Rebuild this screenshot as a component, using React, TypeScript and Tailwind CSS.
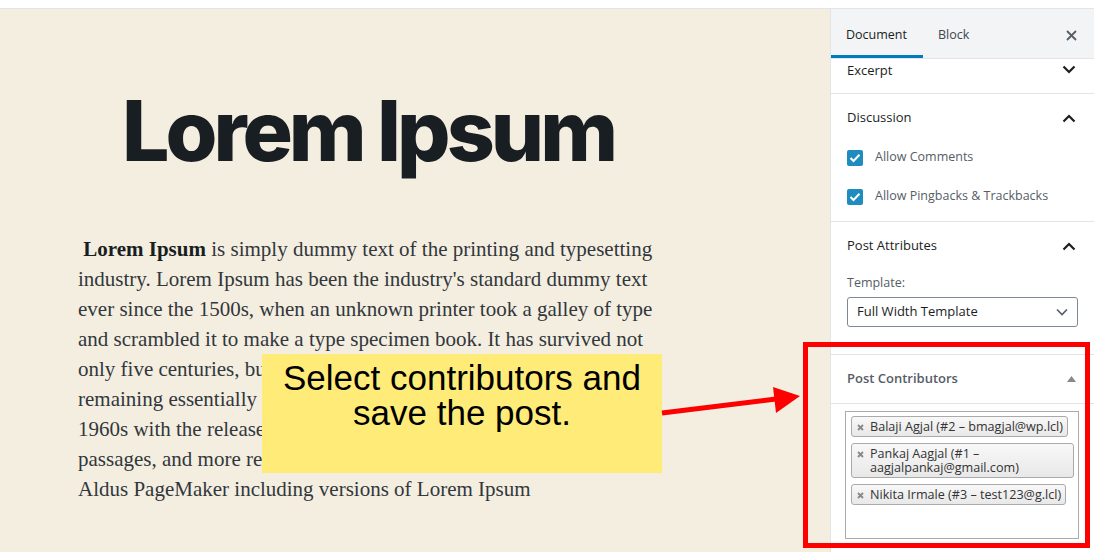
import React from 'react';

const sans = { fontFamily: '"Open Sans", "Noto Sans", sans-serif' };

const bodyLines = [
  'industry. Lorem Ipsum has been the industry\'s standard dummy text',
  'ever since the 1500s, when an unknown printer took a galley of type',
  'and scrambled it to make a type specimen book. It has survived not',
  'only five centuries, but also the leap into electronic typesetting,',
  'remaining essentially unchanged. It was popularised in the',
  '1960s with the release of Letraset sheets containing Lorem Ipsum',
  'passages, and more recently with desktop publishing software like',
  'Aldus PageMaker including versions of Lorem Ipsum',
];

function ChevronDown() {
  return (
    <svg width="14" height="9" viewBox="0 0 14 9" fill="none">
      <path d="M1.5 1.5 L7 7 L12.5 1.5" stroke="#191e23" strokeWidth="2.2" />
    </svg>
  );
}

function ChevronUp() {
  return (
    <svg width="14" height="9" viewBox="0 0 14 9" fill="none">
      <path d="M1.5 7.5 L7 2 L12.5 7.5" stroke="#191e23" strokeWidth="2.2" />
    </svg>
  );
}

function Checkbox({ label }: { label: string }) {
  return (
    <div className="flex items-center h-[39px]">
      <span className="w-4 h-4 rounded-[2px] bg-[#1e8cbe] flex items-center justify-center">
        <svg width="12" height="10" viewBox="0 0 12 10" fill="none">
          <path d="M1.5 5 L4.5 8 L10.5 1.8" stroke="#fff" strokeWidth="2" />
        </svg>
      </span>
      <span className="ml-3 text-[12.5px] text-[#555d66]">{label}</span>
    </div>
  );
}

function Tag({ children, full }: { children: React.ReactNode; full?: boolean }) {
  return (
    <div
      className={
        (full ? 'self-stretch' : 'self-start') +
        ' flex items-start rounded-[3px] border border-[#aaa] bg-gradient-to-b from-[#f8f8f8] to-[#e8e8e8] pl-[5px] pr-[4px] py-[2.5px] text-[12.6px] leading-[14px] text-[#333]'
      }
    >
      <span className="mt-[4px] mr-[6px] shrink-0">
        <svg width="7" height="7" viewBox="0 0 7 7">
          <path d="M1 1 L6 6 M6 1 L1 6" stroke="#888" strokeWidth="1.8" />
        </svg>
      </span>
      <span>{children}</span>
    </div>
  );
}

export default function App() {
  return (
    <div className="w-[1094px] h-[552px] overflow-hidden bg-white relative" style={sans}>
      <div className="h-[8px] border-b border-[#e2e4e7] box-content" />
      <div className="flex h-[543px]">
        {/* editor */}
        <div className="w-[830px] bg-[#f4eee0] pl-[78px]">
          <h1
            className="mt-[72px] w-[580px] text-center text-[84px] font-extrabold leading-[100px] tracking-[-4px] text-[#191e23]"
            style={{ fontFamily: 'Inter, sans-serif' }}
          >
            Lorem Ipsum
          </h1>
          <p
            className="mt-[53px] w-[620px] whitespace-nowrap text-[21px] leading-[30px] text-[#32373c]"
            style={{ fontFamily: '"Liberation Serif", serif' }}
          >
            &nbsp;<b className="text-[#191e23]">Lorem Ipsum</b> is simply dummy text of the printing and typesetting
            {bodyLines.map((line) => (
              <React.Fragment key={line}>
                <br />
                {line}
              </React.Fragment>
            ))}
          </p>
        </div>

        {/* sidebar */}
        <div className="w-[264px] border-l border-[#e2e4e7] bg-white text-[#191e23]">
          <div className="h-[50px] bg-[#f3f4f5] border-b border-[#e2e4e7] flex items-stretch text-[12.5px]">
            <div className="w-[92px] flex items-center pl-[15px] border-b-[3px] border-[#007cba] pt-[6px]">Document</div>
            <div className="flex items-center pl-[15px] pt-[3px] text-[#40464d]">Block</div>
            <div className="ml-auto flex items-center pr-[17px] pt-[3px]">
              <svg width="11" height="11" viewBox="0 0 11 11">
                <path d="M1 1 L10 10 M10 1 L1 10" stroke="#555d66" strokeWidth="1.8" />
              </svg>
            </div>
          </div>

          <div className="h-[35px] border-b border-[#e2e4e7] flex items-start pt-[1px] px-[16px] justify-between">
            <span className="text-[13px] font-medium leading-[20px]">Excerpt</span>
            <span className="pt-[5px] pr-[2px]"><ChevronDown /></span>
          </div>

          <div className="h-[128px] border-b border-[#e2e4e7] px-[16px]">
            <div className="h-[48px] flex items-center justify-between">
              <span className="text-[13px] font-medium">Discussion</span>
              <span className="pr-[2px]"><ChevronUp /></span>
            </div>
            <div className="-mt-[4px]">
              <Checkbox label="Allow Comments" />
              <Checkbox label="Allow Pingbacks & Trackbacks" />
            </div>
          </div>

          <div className="h-[133px] border-b border-[#e2e4e7] px-[16px]">
            <div className="h-[48px] flex items-center justify-between">
              <span className="text-[13px] font-medium">Post Attributes</span>
              <span className="pr-[2px]"><ChevronUp /></span>
            </div>
            <div className="text-[12.5px] text-[#555d66] leading-[26px]">Template:</div>
            <div className="mt-[1px] h-[30px] rounded-[3px] border border-[#7e8993] flex items-center justify-between px-[9px] text-[13px]">
              <span>Full Width Template</span>
              <svg width="12" height="8" viewBox="0 0 12 8" fill="none">
                <path d="M1 1.5 L6 6.5 L11 1.5" stroke="#555d66" strokeWidth="1.6" />
              </svg>
            </div>
          </div>

          <div className="h-[49px] border-b border-[#e2e4e7] flex items-center justify-between px-[16px]">
            <span className="text-[13px] font-semibold text-[#555d66]">Post Contributors</span>
            <svg width="9" height="6" viewBox="0 0 9 6" className="mr-[2px]">
              <polygon points="4.5,0 9,6 0,6" fill="#888" />
            </svg>
          </div>

          <div className="pl-[14px] pt-[7px]">
            <div className="h-[128px] w-[234px] border border-[#aaa] flex flex-col gap-[6px] pt-[4px] pl-[5px] pr-[4px]">
              <Tag>Balaji Agjal (#2 – bmagjal@wp.lcl)</Tag>
              <Tag full>
                Pankaj Aagjal (#1 –<br />
                aagjalpankaj@gmail.com)
              </Tag>
              <Tag>Nikita Irmale (#3 – test123@g.lcl)</Tag>
            </div>
          </div>
        </div>
      </div>

      {/* annotation overlays */}
      <div
        className="absolute left-[262px] top-[354px] w-[400px] h-[119px] bg-[#ffec78] text-center text-[35px] leading-[35px] text-black pt-[6px]"
        style={{ fontFamily: '"Liberation Sans", Arial, sans-serif' }}
      >
        Select contributors and
        <br />
        save the post.
      </div>
      <div className="absolute left-[803px] top-[342px] w-[287px] h-[206px] border-[5px] border-[#ff0000]" />
      <svg className="absolute left-0 top-0 pointer-events-none" width="1094" height="552">
        <line x1="662" y1="413" x2="776" y2="399" stroke="#ff0000" strokeWidth="5" />
        <polygon points="800,396 773,387 776,413" fill="#ff0000" />
      </svg>
    </div>
  );
}
